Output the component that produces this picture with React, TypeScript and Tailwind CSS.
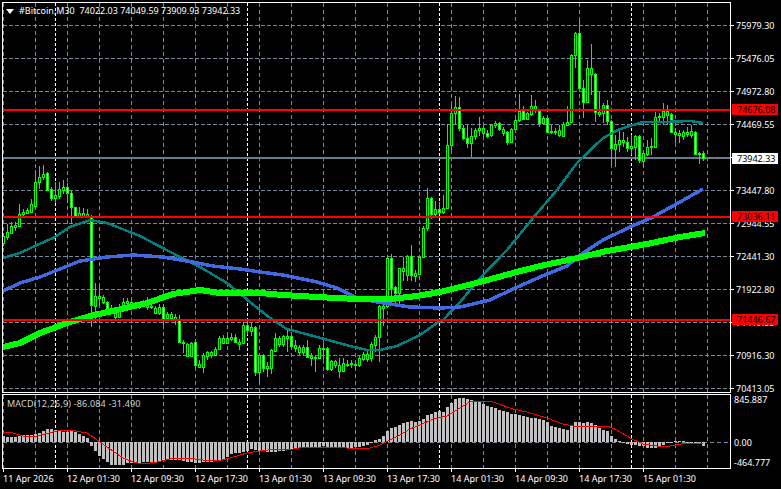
import React from "react";

// top, bottom, wick top, wick bottom, white body (1) in page pixels
const CANDLES: number[][] = [
  [236,243,233,246,0],[232,237,224,240,0],[226,233,222,234,0],[225,227,222,231,0],[214,226,204,227,0],[212,214,209,217,0],[210,213,208,214,0],[204,212,199,213,0],
  [182,206,170,207,0],[177,182,166,189,0],[174,177,165,180,0],[173,190,172,190,1],[189,198,187,201,1],[195,198,182,203,0],[189,196,182,199,0],[187,190,180,194,0],
  [187,193,183,203,1],[193,207,191,224,1],[207,216,207,218,1],[213,216,207,218,0],[213,216,208,218,0],[214,216,209,218,0],[216,305,215,327,1],[296,306,283,323,0],
  [296,298,286,306,0],[297,302,295,304,0],[302,308,301,309,1],[308,313,305,314,0],[313,317,311,319,0],[307,317,304,318,0],[302,306,298,309,0],[301,303,298,306,0],
  [302,304,300,306,0],[303,307,302,308,0],[304,307,302,309,0],[302,305,300,307,0],[300,307,297,310,0],[306,307,303,309,0],[308,313,306,314,0],[307,313,304,315,0],
  [307,319,305,325,1],[314,318,312,320,0],[314,318,312,320,0],[317,319,314,325,0],[320,342,315,343,1],[342,343,340,353,0],[344,356,343,357,0],[343,356,342,357,0],
  [342,365,341,368,1],[364,367,360,368,0],[355,367,353,373,0],[352,356,351,360,0],[352,355,351,358,0],[349,355,347,356,0],[338,349,336,350,0],[338,343,335,344,0],
  [338,343,336,344,0],[337,339,333,341,0],[337,342,334,343,1],[342,344,339,350,0],[325,343,322,344,0],[325,330,321,335,1],[327,331,323,336,0],[327,372,326,376,1],
  [355,372,354,383,0],[355,368,354,372,1],[366,368,362,377,0],[350,368,349,374,0],[338,351,333,352,0],[338,344,336,347,0],[336,344,335,347,0],[336,338,330,352,0],
  [336,346,335,348,1],[345,348,340,352,0],[347,352,345,355,0],[347,352,345,355,0],[347,357,340,358,1],[356,358,353,366,0],[357,358,356,372,0],[348,358,345,359,0],
  [348,349,343,360,0],[348,369,347,371,1],[361,369,360,371,0],[361,365,360,368,0],[365,371,358,378,0],[363,371,358,372,0],[364,365,360,367,0],[363,364,360,368,0],
  [364,365,362,369,0],[358,365,356,367,0],[354,359,352,361,0],[354,359,351,362,0],[344,358,342,362,0],[337,345,335,352,0],[306,337,305,362,0],[306,308,305,326,0],
  [258,306,256,307,0],[258,288,254,300,1],[287,293,286,303,1],[268,293,268,304,0],[268,271,257,281,0],[256,275,255,281,0],[256,275,245,281,1],[273,276,270,282,0],
  [257,274,256,275,0],[228,257,226,258,0],[198,228,188,231,0],[198,214,197,219,1],[209,214,201,216,0],[209,212,202,214,1],[208,212,195,214,0],[145,208,124,209,0],
  [113,145,104,150,0],[107,113,96,125,0],[107,128,97,131,1],[128,138,125,140,1],[138,143,125,148,1],[136,143,128,157,0],[130,136,128,140,0],[128,130,117,136,0],
  [128,133,126,137,0],[133,136,130,138,1],[125,135,124,137,0],[123,125,121,128,0],[123,129,122,131,1],[129,133,127,136,0],[132,142,131,145,1],[129,142,128,143,0],
  [120,129,118,130,0],[111,120,94,122,0],[111,119,106,120,1],[113,119,112,120,0],[106,114,95,116,0],[106,110,100,113,0],[111,123,110,127,1],[118,123,116,125,0],
  [118,132,116,133,1],[131,132,125,134,0],[131,132,128,135,0],[130,135,125,137,0],[124,136,122,137,0],[122,125,106,126,0],[55,122,54,123,0],[33,55,32,68,0],
  [33,88,20,89,1],[88,102,80,118,1],[68,102,60,103,0],[68,74,44,95,0],[74,112,73,122,1],[112,114,92,117,0],[105,113,103,123,0],[105,121,100,125,1],
  [121,148,120,166,1],[144,149,135,167,0],[140,144,130,152,0],[140,142,132,147,0],[142,148,137,152,1],[146,148,135,155,0],[136,147,135,160,0],[136,160,135,163,1],
  [153,161,152,167,0],[147,154,140,156,0],[146,147,138,155,0],[117,147,112,148,0],[116,117,113,122,0],[111,117,103,125,0],[111,115,105,125,0],[114,132,113,133,1],
  [132,134,128,143,0],[133,135,130,143,0],[132,136,130,140,0],[132,134,127,137,0],[131,135,125,138,0],[132,154,131,155,1],[153,154,152,164,0],[153,158,151,161,1],
];

// macd histogram, px above (+) or below (-) the zero line
const HIST = [
  6,5,5,5,6,7,7,7,8,9,11,13,13,12,11,10,10,11,10,8,6,4,
  -4,-9,-14,-17,-20,-23,-23,-23,-23,-21,-21,-21,-21,-20,-20,-20,-20,-19,-19,-18,-18,-18,-18,-19,-20,-20,-21,-21,-20,-20,-20,-19,-19,-18,-15,-12,-11,-11,-10,-9,
  -7,-8,-9,-9,-10,-10,-10,-9,-9,-7,-7,-7,-6,-5,-6,-5,-5,-5,-4,-5,-5,-6,-6,-6,-6,-6,-5,-5,-4,-3,-1,
  2,3,6,11,14,15,17,19,20,21,20,21,23,27,28,30,31,30,35,39,43,44,44,43,42,41,40,38,36,35,34,32,31,30,28,28,27,26,25,24,24,23,22,20,16,15,14,13,12,16,20,20,19,20,19,17,14,12,11,6,3,1,
  0,-2,-3,-3,-4,-4,-6,-6,-6,-4,-3,-1,-1,1,1,1,0,0,-1,-2,-4,
];

const TEAL = "3,258 20,253 37,245 53,238 70,227 90,220 107,223 140,236 180,257 200,267 227,283 250,302 270,318 287,329 317,337 350,346 367,350 380,350 397,346 420,335 437,323 443,320 460,302 480,278 507,250 533,218 557,190 577,163 603,138 620,129 643,122 663,122 690,121 703,123";
const BLUE = "3,291 20,283 40,277 60,269 80,261 107,257 133,255 163,257 187,261 213,266 240,269 260,272 283,275 317,282 337,288 357,298 383,303 410,307 440,308 460,307 473,304 490,300 513,289 540,277 567,266 580,255 603,240 630,227 653,217 680,202 703,189";
const GREEN = "3,347 20,343 40,333 67,323 90,316 117,310 147,303 173,294 200,290 220,293 260,293 283,295 317,297 357,299 390,299 417,296 440,292 460,287 480,282 513,273 540,266 573,259 607,251 647,244 680,237 705,233";
const SIGNAL = "3,432 13,433 23,436 37,436 57,431 70,430 87,433 93,437 107,447 123,458 133,462 143,464 157,462 170,459 187,458 203,460 217,461 230,458 247,453 260,451 277,449 293,449 305,447 340,447 347,448 370,448 380,445 390,440 400,435 410,429 420,425 433,419 447,416 460,408 470,402 483,401 493,402 513,409 527,412 547,418 563,424 573,426 593,426 607,426 617,430 630,438 643,444 657,446 670,446 687,443 703,443";

const GRID_X = Array.from({ length: 23 }, (_, i) => 3 + 32 * i);
const SEP_X = [55, 247, 439, 631];
const GRID_Y = [25, 58, 91, 124, 190, 223, 256, 289, 322, 355, 388];

const PRICES = ["75979.30", "75476.05", "74972.80", "74469.55", "73942.33", "73447.80", "72944.55", "72441.30", "71922.80", "71419.55", "70916.30", "70413.05"];
const TIMES = ["11 Apr 2026", "12 Apr 01:30", "12 Apr 09:30", "12 Apr 17:30", "13 Apr 01:30", "13 Apr 09:30", "13 Apr 17:30", "14 Apr 01:30", "14 Apr 09:30", "14 Apr 17:30", "15 Apr 01:30"];

const VerticalGrid = ({ y1, y2 }: { y1: number; y2: number }) => (
  <>
    {GRID_X.map((x) => (
      <line key={x} x1={x + 0.5} x2={x + 0.5} y1={y1} y2={y2} stroke="#778899" strokeDasharray="4 3" />
    ))}
    {SEP_X.map((x) => (
      <line key={x} x1={x + 0.5} x2={x + 0.5} y1={y1} y2={y2} stroke="#ffffff" strokeDasharray="3 2" />
    ))}
  </>
);

const Candle = ({ index, c }: { index: number; c: number[] }) => {
  const x = 3 + 4 * index;
  const [top, bottom, wickTop, wickBottom, white] = c;
  return (
    <g>
      <rect x={x} y={wickTop} width={1} height={wickBottom - wickTop} fill="#00ff00" />
      <rect x={x - 1} y={top} width={3} height={bottom - top + 1} fill="#00ff00" />
      {bottom - top > 1 && <rect x={x} y={top + 1} width={1} height={bottom - top - 1} fill={white ? "#ffffff" : "#000000"} />}
    </g>
  );
};

const MainChart = () => (
  <svg width={727} height={389} viewBox="3 3 727 389" className="block" shapeRendering="crispEdges">
    {GRID_Y.map((y) => (
      <line key={y} x1={3} x2={730} y1={y + 0.5} y2={y + 0.5} stroke="#778899" strokeDasharray="4 2" />
    ))}
    <VerticalGrid y1={3} y2={392} />
    <line x1={3} x2={730} y1={158} y2={158} stroke="#6b7b8c" strokeWidth={1.5} />
    {CANDLES.map((c, i) => (
      <Candle key={i} index={i} c={c} />
    ))}
    <polyline points={TEAL} fill="none" stroke="#008080" strokeWidth={2.5} />
    <polyline points={BLUE} fill="none" stroke="#4169e1" strokeWidth={3.5} />
    <polyline points={GREEN} fill="none" stroke="#00ff00" strokeWidth={6} />
    {[110, 217, 320].map((y) => (
      <line key={y} x1={3} x2={730} y1={y} y2={y} stroke="#ff0000" strokeWidth={2} />
    ))}
  </svg>
);

const MacdChart = () => (
  <svg width={727} height={73} viewBox="3 395 727 73" className="block" shapeRendering="crispEdges">
    <VerticalGrid y1={395} y2={468} />
    <line x1={3} x2={730} y1={442.5} y2={442.5} stroke="#778899" strokeDasharray="4 3" />
    {HIST.map((v, i) => (
      <rect key={i} x={2 + 4 * i} y={v >= 0 ? 442 - v : 442} width={3} height={Math.max(Math.abs(v), 1)} fill="#c0c0c0" />
    ))}
    <polyline points={SIGNAL} fill="none" stroke="#ff0000" strokeWidth={1} />
  </svg>
);

const PriceTag = ({ price, top, red }: { price: string; top: string; red?: boolean }) => (
  <div className={`absolute left-[732px] flex h-[11px] w-[46px] items-center pl-[5px] leading-none text-black ${top} ${red ? "bg-[#ff0000]" : "bg-white"}`}>
    {price}
  </div>
);

export default function App() {
  return (
    <div className="relative h-[489px] w-[781px] overflow-hidden bg-black pl-[2px] pt-[2px] font-['Noto_Sans',sans-serif] text-[9px] text-white">
      <div className="flex h-[391px]">
        <div className="relative h-[391px] w-[729px] border border-white">
          <MainChart />
          <div className="absolute left-[3px] top-[1px] flex items-center gap-[5px] whitespace-pre leading-[14px]">
            <svg width="8" height="5" viewBox="0 0 8 5">
              <polygon points="0,0 8,0 4,5" fill="#ffffff" />
            </svg>
            <span>#Bitcoin,M30  74022.03 74049.59 73909.93 73942.33</span>
          </div>
        </div>
        <div className="pt-[7px]">
          {PRICES.map((p) => (
            <div key={p} className="flex h-[33px] items-center gap-[2px] leading-none">
              <div className="h-px w-[3px] bg-white" />
              <span>{p}</span>
            </div>
          ))}
        </div>
      </div>

      <div className="mt-px flex">
        <div className="relative h-[75px] w-[729px] border border-white">
          <MacdChart />
          <div className="absolute left-[4px] top-[2px] tracking-[0.17px] text-[#d0d0d0]">MACD(12,26,9) -86.084 -31.490</div>
        </div>
        <div className="pl-[3px]">
          <div className="h-[11px] leading-[11px]">845.887</div>
          <div className="mt-[32px] h-[11px] leading-[11px]">0.00</div>
          <div className="mt-[9px] h-[11px] leading-[11px]">-464.777</div>
        </div>
      </div>

      <div className="flex pl-px">
        {TIMES.map((t) => (
          <div key={t} className="w-[64px]">
            <div className="h-[3px] w-px bg-white" />
            <div className="mt-[1px] leading-[11px]">{t}</div>
          </div>
        ))}
      </div>

      <PriceTag price="74676.08" top="top-[104px]" red />
      <PriceTag price="73942.33" top="top-[153px]" />
      <PriceTag price="73036.11" top="top-[211px]" red />
      <PriceTag price="71446.67" top="top-[314px]" red />
    </div>
  );
}
